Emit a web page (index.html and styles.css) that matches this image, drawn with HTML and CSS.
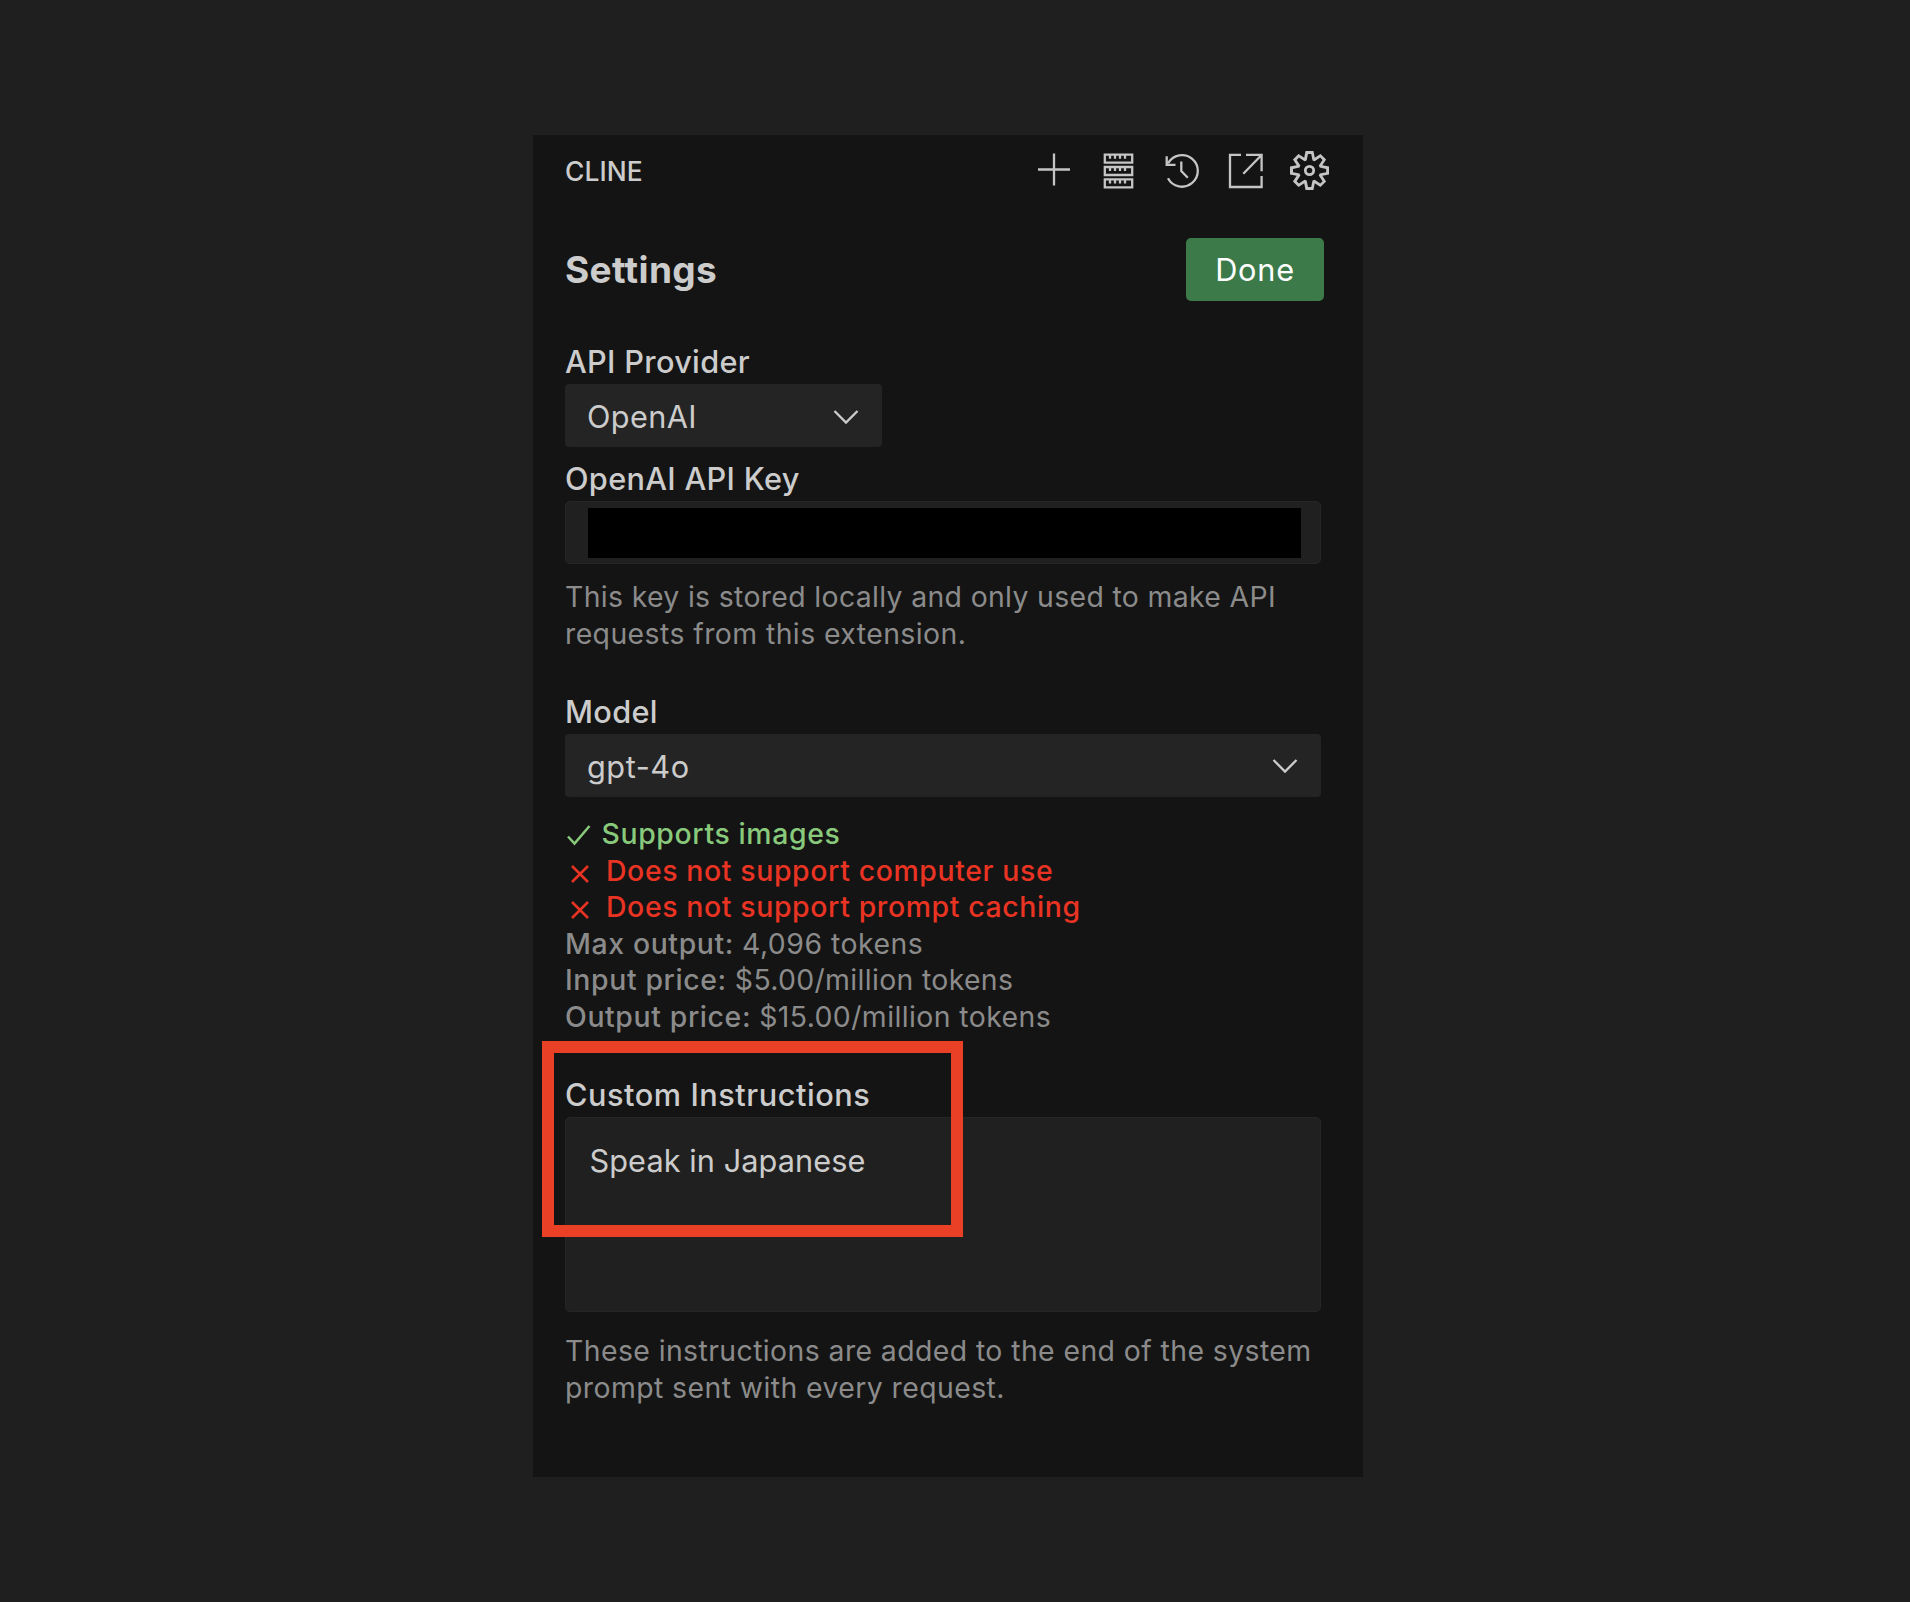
FILE: index.html
```html
<!DOCTYPE html>
<html lang="en">
<head>
<meta charset="utf-8">
<title>Cline Settings</title>
<link rel="stylesheet" href="styles.css">
</head>
<body>
<main class="panel">
  <header class="bar">
    <span class="bar-title">CLINE</span>
    <nav class="actions">
      <svg class="icon" viewBox="0 0 39 39"><path d="M20 2.500v32M4 18.500h32"/></svg>
      <svg class="icon" viewBox="0 0 39 39">
        <path d="M6.800 3.700h27.400v8H6.800zM6.800 16h27.400v8H6.800zM6.800 28.300h27.400v8H6.800z"/>
        <path d="M12 4v3.800M17 4v3.800M22 4v3.800M27 4v3.800M12 16.300v3.800M17 16.300v3.800M22 16.300v3.800M27 16.300v3.800M12 28.600v3.800M17 28.600v3.800M22 28.600v3.800M27 28.600v3.800"/>
      </svg>
      <svg class="icon" viewBox="0 0 39 39"><path d="M6 27.200A15.800 15.800 0 1 0 6.200 12.200M4.700 5.200v8.700H13.500M19.300 10.500V20l6.500 6.700"/></svg>
      <svg class="icon" viewBox="0 0 39 39"><path d="M15 3.900H4V36H35.600V25M20 3.900H35.600V20.200M17.300 22.800L35.300 4.300"/></svg>
      <svg class="icon gear" viewBox="0 0 24 24"><path fill-rule="evenodd" clip-rule="evenodd" d="M19.85 8.750l4.150.830v4.840l-4.150.830 2.350 3.520-3.430 3.430-3.520-2.350-.830 4.150H9.580l-.830-4.150-3.520 2.350-3.430-3.430 2.350-3.520L0 14.420V9.580l4.150-.830L1.800 5.230 5.230 1.800l3.520 2.350L9.580 0h4.840l.830 4.150 3.520-2.350 3.430 3.430-2.350 3.520zm-1.570 5.070l4-.810v-2l-4-.810-.540-1.300 2.290-3.430-1.430-1.430-3.430 2.290-1.300-.540-.810-4h-2l-.810 4-1.300.540-3.430-2.290-1.430 1.430L6.380 8.900l-.540 1.300-4 .810v2l4 .810.540 1.300-2.290 3.430 1.430 1.430 3.430-2.290 1.300.540.810 4h2l.810-4 1.300-.540 3.430 2.290 1.430-1.430-2.290-3.430.540-1.300zM12 8.570a3.430 3.430 0 1 1 0 6.860a3.430 3.430 0 1 1 0-6.860zm0 1.720a1.710 1.710 0 1 0 0 3.420a1.710 1.710 0 1 0 0-3.420z"/></svg>
    </nav>
  </header>

  <div class="title-row">
    <h1>Settings</h1>
    <button class="done">Done</button>
  </div>

  <section class="field provider">
    <div class="label">API Provider</div>
    <div class="select select-short">
      <span class="sp-openai">OpenAI</span>
      <svg class="chevron" viewBox="0 0 26 16"><path d="M1.500 2L13 13.500 24.500 2"/></svg>
    </div>
  </section>

  <section class="field key">
    <div class="label">OpenAI API Key</div>
    <div class="input"><div class="redacted"></div></div>
    <p class="note">This key is stored locally and only used to make API<br><span class="sp-wide">requests from this extension.</span></p>
  </section>

  <section class="field model">
    <div class="label">Model</div>
    <div class="select">
      <span class="sp-model">gpt-4o</span>
      <svg class="chevron" viewBox="0 0 26 16"><path d="M1.500 2L13 13.500 24.500 2"/></svg>
    </div>
    <ul class="info">
      <li class="yes"><svg class="mark check" viewBox="0 0 26 22"><path d="M2 12.500L8.500 19.500 23.500 2"/></svg>Supports images</li>
      <li class="no"><svg class="mark cross" viewBox="0 0 20 20"><path d="M2 2l16 16M18 2L2 18"/></svg>Does not support computer use</li>
      <li class="no"><svg class="mark cross" viewBox="0 0 20 20"><path d="M2 2l16 16M18 2L2 18"/></svg>Does not support prompt caching</li>
      <li><b>Max output:</b><span class="tokens">4,096 tokens</span></li>
      <li><b>Input price:</b><span class="price">$5.00/million tokens</span></li>
      <li><b>Output price:</b><span>$15.00/million tokens</span></li>
    </ul>
  </section>

  <section class="field custom">
    <div class="label sp-custom">Custom Instructions</div>
    <div class="textarea">Speak in Japanese</div>
    <p class="note note-custom">These instructions are added to the end of the system<br><span class="sp-wide">prompt sent with every request.</span></p>
    <div class="highlight"></div>
  </section>
</main>
</body>
</html>
```

FILE: styles.css
```css
* { box-sizing: border-box; }

body {
  margin: 0;
  min-height: 1602px;
  padding: 135px 547px 125px 533px;
  background: #1f1f1f;
  color: #cccccc;
  font-family: Inter, "Liberation Sans", sans-serif;
  font-size: 30.7px;
}

.panel {
  width: 830px;
  height: 1342px;
  padding: 0 42px 0 32px;
  background: #141414;
}

.bar {
  display: flex;
  align-items: center;
  justify-content: space-between;
  height: 70px;
  margin-right: -8px;
}

.bar-title {
  padding-top: 1px;
  font-size: 26.4px;
  font-weight: 450;
  letter-spacing: 0.1px;
}

.actions { display: flex; gap: 24.9px; }

.icon {
  width: 39px;
  height: 39px;
  fill: none;
  stroke: #c5c5c5;
  stroke-width: 2.3;
}

.gear { fill: #c5c5c5; stroke: none; }

.title-row {
  display: flex;
  align-items: center;
  justify-content: space-between;
  height: 64px;
  margin: 32px -3px 0 0;
}

h1 {
  margin: 0;
  font-size: 37px;
  font-weight: 700;
  letter-spacing: 0.36px;
}

.done {
  width: 138px;
  height: 63px;
  margin-top: 1px;
  padding: 1px 0 0;
  border: 0;
  border-radius: 5px;
  background: #3d7a4a;
  color: #ffffff;
  font: 400 30.7px/62px Inter, sans-serif;
  letter-spacing: 0.77px;
}

.label {
  font-weight: 500;
  line-height: 44px;
  letter-spacing: 0.32px;
}

.provider { margin-top: 39px; }
.key { margin-top: 10px; }
.model { margin-top: 37.4px; }
.custom { position: relative; margin-top: 37.200px; }

.select {
  display: flex;
  align-items: center;
  justify-content: space-between;
  height: 63px;
  padding: 2px 23.5px 0 22px;
  border-radius: 4px;
  background: #242424;
}

.select-short { width: 317px; }

.chevron {
  width: 26px;
  height: 16px;
  fill: none;
  stroke: #cccccc;
  stroke-width: 2.3;
}

.input {
  height: 63px;
  padding: 6px 19px 5.5px 22px;
  border: 1px solid #262626;
  border-radius: 5px;
  background: #202020;
}

.redacted { height: 50px; background: #000000; }

.note {
  margin: 15.4px 0 0;
  color: #8b8b8b;
  font-size: 28.4px;
  line-height: 36.6px;
  letter-spacing: 0.34px;
  white-space: nowrap;
}

.note-custom { margin-top: 21.4px; letter-spacing: 0.41px; }

.info {
  margin: 19.1px 0 0;
  padding: 0;
  list-style: none;
  color: #8b8b8b;
  font-size: 28.4px;
  line-height: 36.6px;
}

.info li { display: flex; height: 36.6px; letter-spacing: 0.42px; }
.info b { margin-right: 8px; font-weight: 500; letter-spacing: 0.62px; }
.info .tokens { letter-spacing: 0.5px; }
.info .price { letter-spacing: 0.34px; }
.info .yes { color: #89c97c; font-weight: 500; letter-spacing: 0.63px; }
.info .no { color: #e93323; font-weight: 500; letter-spacing: 0.63px; }

.mark { fill: none; stroke: currentColor; stroke-width: 2.5; }
.check { width: 26px; height: 22px; margin: 8px 9.5px 0 1px; }
.cross { width: 20px; height: 20px; margin: 11px 16px 0 5px; }

.sp-openai { letter-spacing: 0.35px; }
.sp-model { letter-spacing: 0.55px; }
.sp-wide { letter-spacing: 0.42px; }
.sp-custom { letter-spacing: 0.54px; }

.textarea {
  height: 195px;
  padding: 20px 23.5px;
  border: 1px solid #262626;
  border-radius: 5px;
  background: #202020;
  line-height: 46px;
  letter-spacing: 0.07px;
}

/* Callout frame drawn over the custom instructions field. */
.highlight {
  position: absolute;
  top: -31.5px;
  left: -23.3px;
  width: 421.3px;
  height: 195.5px;
  border: 12px solid #ea4025;
}
```
